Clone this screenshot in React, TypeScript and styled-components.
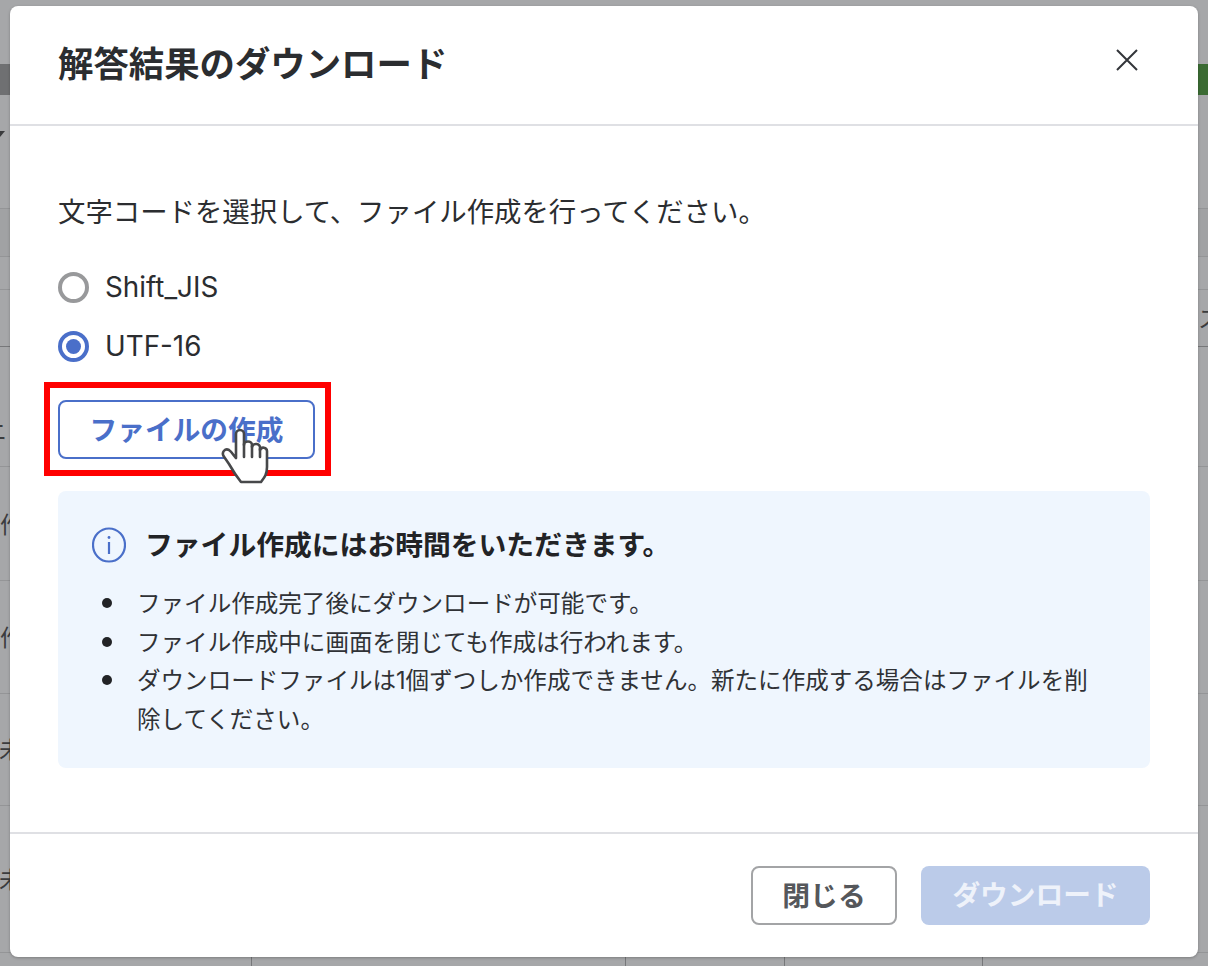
import React from 'react';
import styled, { createGlobalStyle } from 'styled-components';

const rows = [
    { height: 114, left: '', top: 0, shift: 0, caret: true, band: false, dark: false },
    { height: 48, left: '', top: 0, shift: 0, caret: false, band: true, dark: false },
    { height: 33, left: '', top: 0, shift: 0, caret: false, band: false, dark: false },
    { height: 57, left: '', top: 0, shift: 0, caret: false, band: false, dark: true, right: 'ス' },
    { height: 120, left: 'ニ', top: 70, shift: -16, caret: false, band: false, dark: false },
    { height: 114, left: '作', top: 43, shift: 0, caret: false, band: false, dark: false },
    { height: 113, left: '作', top: 42, shift: 0, caret: false, band: false, dark: false },
    { height: 112, left: '未', top: 41, shift: -1, caret: false, band: false, dark: false },
    { height: 147, left: '未', top: 59, shift: -1, caret: false, band: false, dark: false },
];

const notes = [
    'ファイル作成完了後にダウンロードが可能です。',
    'ファイル作成中に画面を閉じても作成は行われます。',
    'ダウンロードファイルは1個ずつしか作成できません。新たに作成する場合はファイルを削除してください。',
];

const App: React.FC = () => {
    return (
        <Page>
            <GlobalStyle />

            <Table>
                <TopGap />
                <HeadRow>
                    <HeadCell />
                    <HeadCell $green />
                </HeadRow>
                {rows.map((row, i) => (
                    <Row key={i} $height={row.height} $dark={row.dark} $band={row.band}>
                        <SideCell $top={row.top}>
                            {row.caret && <Caret />}
                            {row.left && <Fragment $shift={row.shift}>{row.left}</Fragment>}
                        </SideCell>
                        <SideCell $top={14}>{row.right && <Fragment $shift={0}>{row.right}</Fragment>}</SideCell>
                    </Row>
                ))}
                <LastRow>
                    <LastCell />
                    <LastCell />
                    <LastCell />
                    <LastCell />
                    <LastCell />
                </LastRow>
            </Table>

            <Modal>
                <Header>
                    <Title>解答結果のダウンロード</Title>
                    <CloseIcon viewBox="0 0 22 22">
                        <path d="M1 1 L21 21 M21 1 L1 21" />
                    </CloseIcon>
                </Header>

                <Body>
                    <Lead>文字コードを選択して、ファイル作成を行ってください。</Lead>

                    <RadioGroup>
                        <RadioRow>
                            <Radio />
                            Shift_JIS
                        </RadioRow>
                        <RadioRow>
                            <Radio $checked />
                            UTF-16
                        </RadioRow>
                    </RadioGroup>

                    <CreateArea>
                        <CreateButton>ファイルの作成</CreateButton>
                        <Highlight />
                        <HandCursor viewBox="0 0 50 60">
                            <path
                                d="M16 33 L16 9 a4 4 0 0 1 8 0 L24 20 a4 3.5 0 0 1 8 0 L32 22 a4 3.5 0 0 1 8 1 L40 25 a3.6 3.5 0 0 1 7 1 L47 42 C47 50 44 53 41 57 L21 57 C17 52 13 46 9 39 L3.5 31 C1.5 27 5 23 9 25 C12 27 14 31 16 33 Z"
                                fill="#ffffff"
                            />
                            <path d="M24 19 L24 32 M32 21 L32 32 M40 24 L40 32" fill="none" />
                        </HandCursor>
                    </CreateArea>

                    <Notice>
                        <NoticeHead>
                            <InfoIcon viewBox="0 0 34 36">
                                <ellipse cx="17" cy="18" rx="16" ry="16.5" />
                                <path d="M17 15 L17 27" />
                                <circle cx="17" cy="10.5" r="1.4" />
                            </InfoIcon>
                            <NoticeTitle>ファイル作成にはお時間をいただきます。</NoticeTitle>
                        </NoticeHead>
                        <NoteList>
                            {notes.map((note) => (
                                <NoteItem key={note}>
                                    <Bullet />
                                    <span>{note}</span>
                                </NoteItem>
                            ))}
                        </NoteList>
                    </Notice>
                </Body>

                <Footer>
                    <CloseButton>閉じる</CloseButton>
                    <DownloadButton>ダウンロード</DownloadButton>
                </Footer>
            </Modal>
        </Page>
    );
};

const GlobalStyle = createGlobalStyle`
    html, body {
        margin: 0;
        padding: 0;
        overflow: hidden;
    }

    body {
        font-family: "Inter", "Noto Sans CJK JP", sans-serif;
        color: #2b2d30;
    }
`;

const Page = styled.div`
    position: relative;
    width: 1208px;
    height: 966px;
    overflow: hidden;
    background-color: #a6a7a9;
`;

const Table = styled.div`
    display: flex;
    flex-direction: column;
    height: 100%;
`;

const TopGap = styled.div`
    height: 64px;
`;

const HeadRow = styled.div`
    height: 31px;
    display: flex;
    justify-content: space-between;
`;

const HeadCell = styled.div<{ $green?: boolean }>`
    width: 10px;
    background-color: ${(p) => (p.$green ? '#3b6b33' : '#6f7072')};
`;

const Row = styled.div<{ $height: number; $dark: boolean; $band: boolean }>`
    height: ${(p) => p.$height}px;
    box-sizing: border-box;
    display: flex;
    justify-content: space-between;
    border-bottom: 1px solid ${(p) => (p.$dark ? '#77787a' : '#949597')};
    background-color: ${(p) => (p.$band ? '#a1a2a4' : 'transparent')};
`;

const SideCell = styled.div<{ $top: number }>`
    width: 10px;
    padding-top: ${(p) => p.$top}px;
    overflow: hidden;
    white-space: nowrap;
`;

const Fragment = styled.span<{ $shift: number }>`
    display: block;
    margin-left: ${(p) => p.$shift}px;
    font-size: 23px;
    line-height: 30px;
    color: #3b3c3e;
`;

const Caret = styled.div`
    width: 0;
    height: 0;
    margin: 36px 0 0 -5px;
    border-top: 6px solid #3b3c3e;
    border-left: 5px solid transparent;
    border-right: 5px solid transparent;
`;

const LastRow = styled.div`
    flex: 1;
    display: grid;
    grid-template-columns: 252px 374px 159px 198px 1fr;
`;

const LastCell = styled.div`
    border-right: 1px solid #77787a;

    &:last-child {
        border-right: 0;
    }
`;

const Modal = styled.div`
    position: absolute;
    top: 6px;
    left: 10px;
    width: 1188px;
    height: 951px;
    display: flex;
    flex-direction: column;
    border-radius: 8px;
    background-color: #ffffff;
    box-shadow: 0 1px 3px rgba(0, 0, 0, 0.25);
`;

const Header = styled.div`
    height: 120px;
    box-sizing: border-box;
    padding: 0 60px 0 48px;
    display: flex;
    align-items: center;
    justify-content: space-between;
    border-bottom: 2px solid #dfe0e4;
`;

const Title = styled.h1`
    margin: 0;
    font-size: 35.4px;
    line-height: 44px;
    font-weight: 700;
    color: #2b2d30;
`;

const CloseIcon = styled.svg`
    width: 22px;
    height: 22px;
    margin-bottom: 10px;

    path {
        fill: none;
        stroke: #33353a;
        stroke-width: 2;
    }
`;

const Body = styled.div`
    flex: 1;
    padding: 66px 48px 0;
`;

const Lead = styled.p`
    margin: 0;
    font-size: 27.4px;
    line-height: 40px;
`;

const RadioGroup = styled.div`
    margin-top: 35px;
    display: flex;
    flex-direction: column;
    gap: 19px;
`;

const RadioRow = styled.label`
    height: 40px;
    display: flex;
    align-items: center;
    gap: 16px;
    font-size: 27.8px;
`;

const Radio = styled.span<{ $checked?: boolean }>`
    width: 31px;
    height: 31px;
    box-sizing: border-box;
    display: flex;
    align-items: center;
    justify-content: center;
    border-radius: 50%;
    border: 4px solid ${(p) => (p.$checked ? '#4a6fc9' : '#98999b')};

    &::after {
        content: '';
        width: 15px;
        height: 15px;
        border-radius: 50%;
        background-color: ${(p) => (p.$checked ? '#4a6fc9' : 'transparent')};
    }
`;

const CreateArea = styled.div`
    position: relative;
    margin-top: 34px;
    width: 257px;
`;

const CreateButton = styled.button`
    width: 257px;
    height: 59px;
    display: block;
    padding: 0 0 3px;
    border: 2px solid #4a6fc9;
    border-radius: 8px;
    background-color: #ffffff;
    color: #4a6fc9;
    font-family: inherit;
    font-size: 27.7px;
    font-weight: 700;
`;

const Highlight = styled.div`
    position: absolute;
    top: -18px;
    left: -14px;
    width: 287px;
    height: 94px;
    box-sizing: border-box;
    border: 6px solid #ff0000;
`;

const HandCursor = styled.svg`
    position: absolute;
    top: 25px;
    left: 162px;
    width: 50px;
    height: 60px;

    path {
        stroke: #47484a;
        stroke-width: 2.6;
        stroke-linejoin: round;
        stroke-linecap: round;
    }
`;

const Notice = styled.div`
    margin-top: 32px;
    height: 277px;
    box-sizing: border-box;
    padding: 34px 50px 0 34px;
    border-radius: 8px;
    background-color: #eff6fe;
`;

const NoticeHead = styled.div`
    display: flex;
    align-items: center;
    gap: 19px;
    height: 40px;
`;

const InfoIcon = styled.svg`
    width: 34px;
    height: 36px;
    flex: none;

    ellipse,
    path {
        fill: none;
        stroke: #4a6fc9;
        stroke-width: 2.2;
    }

    circle {
        fill: #4a6fc9;
    }
`;

const NoticeTitle = styled.div`
    font-size: 27.8px;
    font-weight: 700;
    line-height: 40px;
    color: #222326;
`;

const NoteList = styled.ul`
    margin: 20px 0 0;
    padding: 0;
    list-style: none;
`;

const NoteItem = styled.li`
    display: flex;
    align-items: flex-start;
    font-size: 23.55px;
    line-height: 38.7px;
    color: #303236;
`;

const Bullet = styled.span`
    width: 10px;
    height: 10px;
    flex: none;
    margin: 13px 25px 0 10px;
    border-radius: 50%;
    background-color: #222326;
`;

const Footer = styled.div`
    height: 125px;
    box-sizing: border-box;
    padding: 32px 48px 0;
    display: flex;
    justify-content: flex-end;
    gap: 24px;
    border-top: 2px solid #dfe0e4;
`;

const CloseButton = styled.button`
    width: 146px;
    height: 59px;
    padding: 0 0 4px;
    border: 2px solid #a3a4a6;
    border-radius: 8px;
    background-color: #ffffff;
    color: #55575b;
    font-family: inherit;
    font-size: 27.8px;
    font-weight: 700;
`;

const DownloadButton = styled.button`
    width: 229px;
    height: 59px;
    padding: 0 0 5px;
    border: 0;
    border-radius: 8px;
    background-color: #bbcbe9;
    color: #eef2fa;
    font-family: inherit;
    font-size: 27.7px;
    font-weight: 700;
`;

export default App;
